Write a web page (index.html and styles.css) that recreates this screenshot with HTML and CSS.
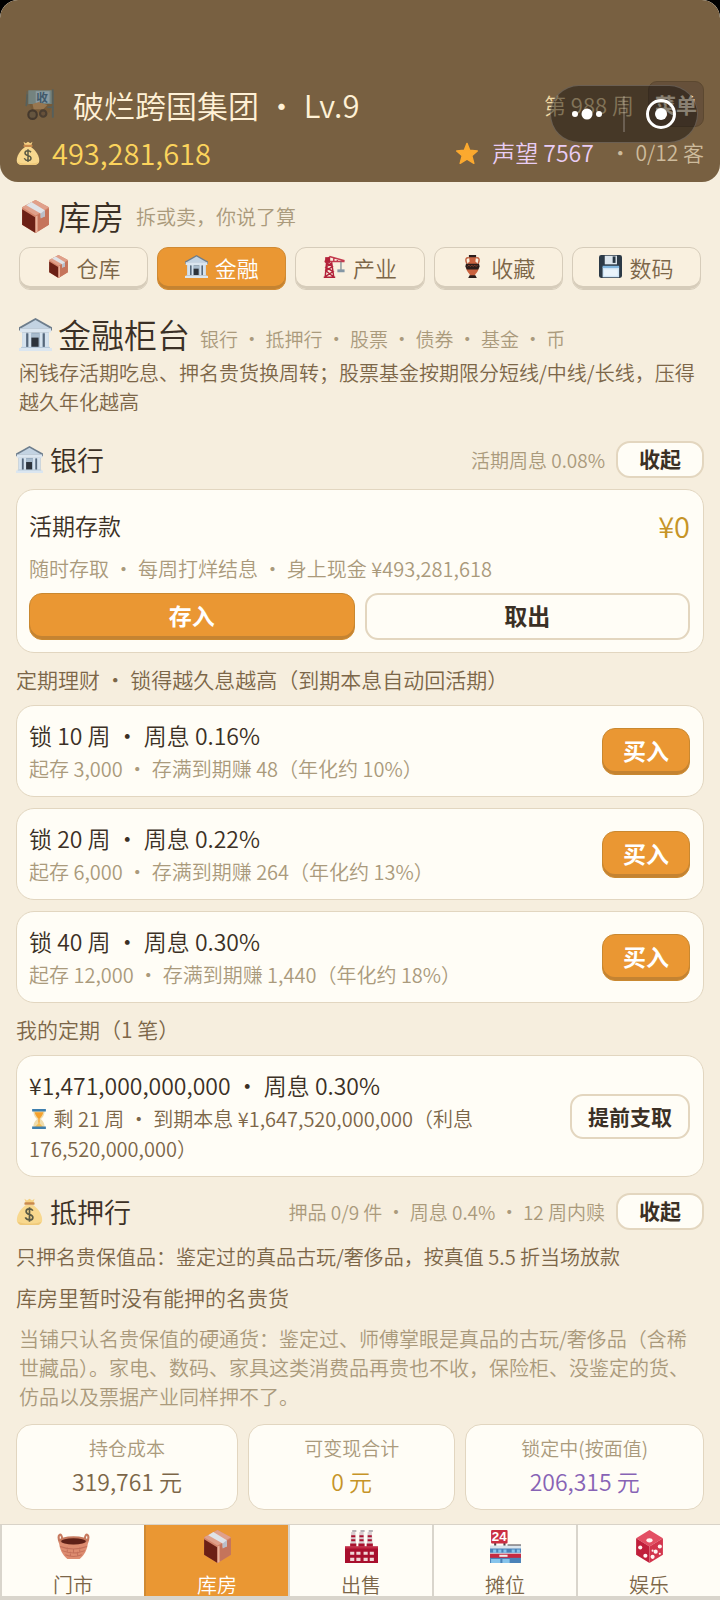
FILE: index.html
```html
<!DOCTYPE html>
<html lang="zh-CN">
<head>
    <meta charset="UTF-8">
    <meta name="viewport" content="width=device-width, initial-scale=1">
    <title>破烂跨国集团</title>
    <link rel="stylesheet" href="styles.css">
</head>
<body>
    <!-- icon sprite -->
    <svg class="sprite" aria-hidden="true">
        <symbol id="i-box" viewBox="0 0 32 32">
            <path fill="#d3856b" d="M16 0 29 7v17L16 32 3 24V7z"/>
            <path fill="#e0a08a" d="M16 0 29 7 16 15 3 7z"/>
            <path fill="#6b2015" d="M3 9l13 8v15L3 24z"/>
            <path fill="#c5745b" d="M29 8v16l-13 8V16z"/>
            <path fill="#e9b29c" d="M16 16l2-1v16l-2 1z"/>
            <path fill="#dfe3e8" d="M7 5l5-3 13 8v6l-4 1v-4z"/>
            <path fill="#b9bfc9" d="M21 13l4-3v6l-4 2z"/>
        </symbol>
        <symbol id="i-bank" viewBox="0 0 32 32">
            <path fill="#6d7d8c" d="M16 0 32 9v3H0V9z"/>
            <path fill="#c3d3e2" d="M16 2 30 10H2z"/>
            <path fill="#dbe6f0" d="M1 10h30v4H1z"/>
            <path fill="#8fa5ba" d="M3 14h26v14H3z"/>
            <path fill="#d5e2ee" d="M3 14h4v14H3zM9 14h3v14H9zM20 14h3v14h-3zM25 14h4v14h-4z"/>
            <path fill="#56677a" d="M7 15h2v13H7zM23 15h2v13h-2z"/>
            <path fill="#a9bccd" d="M12 15h8v13h-8z"/>
            <path fill="#2d333b" d="M12 19h7v9h-7z"/>
            <path fill="#b7c9da" d="M2 28h28v2H2z"/>
            <path fill="#dbe6f0" d="M0 29h32v3H0z"/>
        </symbol>
        <symbol id="i-crane" viewBox="0 0 32 32">
            <path fill="none" stroke="#b3223a" stroke-width="2" d="M5 10 3 31M12 10l3 21M5 11l8 5-9 6 10 8M12 11l-8 6 10 6-11 7M1 31h16"/>
            <path fill="none" stroke="#c33a4e" stroke-width="2" d="M2 9h28M9 2l21 6M10 2 3 8M15 8V4M20 8V5"/>
            <path fill="#b3223a" d="M3 3h7v8H3z"/>
            <path stroke="#697987" stroke-width="1.5" d="M25 9v12"/>
            <path fill="#8497a5" d="M20 20h10v4H20z"/>
        </symbol>
        <symbol id="i-vase" viewBox="0 0 32 32">
            <path fill="none" stroke="#bf5d3c" stroke-width="2" d="M11 4C6 3 6 7 8 12M21 4c5-1 5 3 3 8"/>
            <path fill="#c9623f" d="M11 2h10l-1 7c5 3 6 9 3 14-2 3-4 4-4 7h-6c0-3-2-4-4-7-3-5-2-11 3-14z"/>
            <path fill="#2b1d1b" d="M11 0h10v3H11zM7 12h18l1 4-2 4H8l-2-4zM12 28h8l2 4H10z"/>
            <path fill="none" stroke="#a54c32" d="M9 16l2-2 2 2 2-2 2 2 2-2 2 2 2-2"/>
        </symbol>
        <symbol id="i-disk" viewBox="0 0 32 32">
            <rect width="32" height="32" rx="3" fill="#2c3a47"/>
            <path fill="#dce6ee" d="M8 1h17v12H8z"/>
            <path fill="#263542" d="M19 2h4v9h-4z"/>
            <path fill="#cfe5f6" d="M5 17h23v14H5z"/>
            <path fill="#7fb6e0" d="M5 15h23v3H5z"/>
            <path fill="#eaf4fb" d="M7 20h19v9H7z"/>
        </symbol>
        <symbol id="i-bag" viewBox="0 0 32 32">
            <path fill="#f6d183" d="M10 1l3 2 3-2 3 2 3-2-2 6h-8z"/>
            <path fill="#f8d88e" d="M12 8h8c7 5 11 12 11 18 0 4-3 6-7 6H8c-4 0-7-2-7-6 0-6 4-13 11-18z"/>
            <path fill="#efc97a" d="M2 28c7 3 21 3 28 0-1 3-3 4-6 4H8c-3 0-5-1-6-4z"/>
            <rect x="10" y="5" width="12" height="3" rx="1" fill="#c98a4c"/>
            <path fill="none" stroke="#5b5b45" stroke-width="2" d="M20 15c-2-3-8-3-8 1 0 5 8 2 8 7 0 4-7 4-9 0M16 11v17"/>
        </symbol>
        <symbol id="i-star" viewBox="0 0 32 32">
            <path fill="#fba92f" stroke="#fba92f" stroke-width="2" stroke-linejoin="round" d="M16 2l4 10 11 1-8 7 3 11-10-6-10 6 3-11-8-7 11-1z"/>
        </symbol>
        <symbol id="i-hourglass" viewBox="0 0 32 32">
            <path fill="#f0dcab" d="M7 3h18c0 7-3 10-6 13 3 3 6 6 6 13H7c0-7 3-10 6-13-3-3-6-6-6-13z"/>
            <path fill="#f5a12d" d="M9 5h14c-1 5-4 8-6 10v7h-2v-7C13 13 10 10 9 5z"/>
            <path fill="#f7bf55" d="M16 22l7 7H9z"/>
            <path fill="#3f7fae" d="M5 0h22v4H5zM5 28h22v4H5z"/>
        </symbol>
        <symbol id="i-basket" viewBox="0 0 32 32">
            <path fill="none" stroke="#c77a5f" stroke-width="2" d="M3 13C-1 3 5 2 5 9M29 13c4-10-2-11-2-4"/>
            <path fill="#dd8c70" d="M2 11h28c0 8-4 14-8 17H10C6 25 2 19 2 11z"/>
            <ellipse cx="16" cy="10" rx="14" ry="4" fill="#c77a5f"/>
            <ellipse cx="16" cy="11" rx="12" ry="3" fill="#5f2118"/>
            <path fill="none" stroke="#c4705a" d="M3 16c8 3 18 3 26 0M5 20c7 3 15 3 22 0M8 24c5 2 11 2 16 0M10 17v4M16 18v4M22 17v4M13 21v4M20 21v4"/>
        </symbol>
        <symbol id="i-factory" viewBox="0 0 32 32">
            <path fill="#d8cdd0" d="M6 2h4l1 15H5zM14 2h4l1 15h-6zM22 2h4l1 15h-6z"/>
            <path fill="#a9122e" d="M6 5h4v2H6zM6 9h4v2H6zM5 13h6v3H5zM14 5h4v2h-4zM14 9h4v2h-4zM13 13h6v3h-6zM22 5h4v2h-4zM22 9h4v2h-4zM21 13h6v3h-6z"/>
            <path fill="#b5b1b5" d="M7 0h4v2H7zM15 0h4v2h-4zM23 0h4v2h-4z"/>
            <path fill="#a80f2d" d="M0 16h32v16H0z"/>
            <path fill="#c22a44" d="M0 16h32v2H0z"/>
            <path fill="#f0d6d7" d="M5 21h4v3H5zM11 21h4v3h-4zM18 21h4v3h-4zM24 21h4v3h-4zM5 27h4v3H5zM11 27h4v3h-4zM18 27h4v3h-4zM24 27h4v3h-4z"/>
        </symbol>
        <symbol id="i-store" viewBox="0 0 32 32">
            <path fill="#4b4448" d="M5 12h2v4H5zM14 12h2v4h-2zM18 14h13v3H18z"/>
            <rect x="2" width="16" height="13" rx="1" fill="#ca2f43"/>
            <text class="store-sign" x="10" y="11" text-anchor="middle">24</text>
            <path fill="#4a82b8" d="M1 16h30v16H1z"/>
            <path fill="#dbe5ed" d="M1 15h30v3H1zM1 22h30v3H1z"/>
            <path fill="#86c4ec" d="M4 19h3v3H4zM9 19h3v3H9zM14 19h3v3h-3zM22 19h3v3h-3zM27 19h3v3h-3zM2 28h9v4H2zM13 28h7v4h-7z"/>
            <path fill="#c52a42" d="M1 23h30v4H1z"/>
            <path fill="#f2edeb" d="M10 24h8v2h-8z"/>
        </symbol>
        <symbol id="i-dice" viewBox="0 0 32 32">
            <path fill="#e34f63" d="M16 0 29 8 16 16 3 8z"/>
            <path fill="#c01f3b" d="M3 8l13 8v16L3 24z"/>
            <path fill="#d3354d" d="M29 8v16l-13 8V16z"/>
            <g fill="#fff5f3"><ellipse cx="16" cy="10" rx="3" ry="2"/><circle cx="7" cy="17" r="2"/><circle cx="12" cy="25" r="2"/><circle cx="19" cy="26" r="2"/><circle cx="22" cy="21" r="2"/><circle cx="26" cy="16" r="2"/><circle cx="26" cy="23" r="1"/><circle cx="19" cy="20" r="1"/></g>
        </symbol>
        <symbol id="i-cart" viewBox="0 0 32 32">
            <path fill="#696250" d="M3 4h26v13H3z"/>
            <path fill="#74837f" d="M5 3h22v13H5z"/>
            <path fill="#8a9ba2" d="M12 4h13v11H12z"/>
            <path stroke="#56605c" stroke-width="1.5" d="M28 2v27M4 7l-1 11"/>
            <path fill="#765a38" d="M6 16h22l-3 8H9z"/>
            <path fill="#987750" d="M9 16l6-2 8 3-4 4h-9z"/>
            <circle cx="9" cy="26" r="4" fill="#65553f" stroke="#45392d" stroke-width="2"/>
            <circle cx="19" cy="25" r="3" fill="#67513a" stroke="#4b3e31" stroke-width="2"/>
            <path fill="none" stroke="#56605c" stroke-width="1.5" d="M23 19h5v9"/>
            <text class="cart-sign" x="18" y="14" text-anchor="middle">收</text>
        </symbol>
    </svg>

    <header class="topbar">
        <div class="topbar-row">
            <svg class="cart-icon"><use href="#i-cart"/></svg>
            <h1 class="company">破烂跨国集团 ・ Lv.9</h1>
            <span class="week">第 988 周</span>
            <button class="menu-btn" type="button">菜单</button>
        </div>
        <div class="topbar-row stats-row">
            <svg class="bag-icon"><use href="#i-bag"/></svg>
            <span class="money">493,281,618</span>
            <svg class="star-icon"><use href="#i-star"/></svg>
            <span class="fame">声望 7567</span>
            <span class="guests">・ 0/12 客</span>
        </div>
        <!-- host app capsule floats over the bar -->
        <div class="capsule">
            <button type="button" aria-label="更多"><svg width="36" height="36" viewBox="0 0 36 36" fill="#fff"><circle cx="6" cy="18" r="3"/><circle cx="18" cy="18" r="5.5"/><circle cx="30" cy="18" r="3"/></svg></button>
            <span class="capsule-line"></span>
            <button type="button" aria-label="关闭"><svg width="36" height="36" viewBox="0 0 36 36"><circle cx="18" cy="18" r="13.5" fill="none" stroke="#fff" stroke-width="3"/><circle cx="18" cy="18" r="6" fill="#fff"/></svg></button>
        </div>
    </header>

    <main class="content">
        <div class="page-title">
            <svg class="title-icon"><use href="#i-box"/></svg>
            <h2>库房</h2>
            <span class="page-hint">拆或卖，你说了算</span>
        </div>

        <div class="tabs">
            <button class="tab" type="button"><svg><use href="#i-box"/></svg>仓库</button>
            <button class="tab active" type="button"><svg><use href="#i-bank"/></svg>金融</button>
            <button class="tab" type="button"><svg><use href="#i-crane"/></svg>产业</button>
            <button class="tab" type="button"><svg><use href="#i-vase"/></svg>收藏</button>
            <button class="tab" type="button"><svg><use href="#i-disk"/></svg>数码</button>
        </div>

        <section class="intro">
            <div class="intro-head">
                <svg class="title-icon"><use href="#i-bank"/></svg>
                <h2>金融柜台</h2>
                <span class="intro-hint">银行 ・ 抵押行 ・ 股票 ・ 债券 ・ 基金 ・ 币</span>
            </div>
            <p>闲钱存活期吃息、押名贵货换周转；股票基金按期限分短线/中线/长线，压得越久年化越高</p>
        </section>

        <section>
            <div class="section-head">
                <svg class="section-icon"><use href="#i-bank"/></svg>
                <h3>银行</h3>
                <span class="section-note">活期周息 0.08%</span>
                <button class="btn btn-small" type="button">收起</button>
            </div>

            <div class="card">
                <div class="deposit-head">
                    <span class="item-title">活期存款</span>
                    <span class="balance">¥0</span>
                </div>
                <p class="item-sub deposit-sub">随时存取 ・ 每周打烊结息 ・ 身上现金 ¥493,281,618</p>
                <div class="deposit-actions">
                    <button class="btn btn-primary" type="button">存入</button>
                    <button class="btn" type="button">取出</button>
                </div>
            </div>

            <h4 class="subhead">定期理财 ・ 锁得越久息越高（到期本息自动回活期）</h4>
            <div class="card item">
                <div class="item-text">
                    <p class="item-title">锁 10 周 ・ 周息 0.16%</p>
                    <p class="item-sub">起存 3,000 ・ 存满到期赚 48（年化约 10%）</p>
                </div>
                <button class="btn btn-primary" type="button">买入</button>
            </div>
            <div class="card item">
                <div class="item-text">
                    <p class="item-title">锁 20 周 ・ 周息 0.22%</p>
                    <p class="item-sub">起存 6,000 ・ 存满到期赚 264（年化约 13%）</p>
                </div>
                <button class="btn btn-primary" type="button">买入</button>
            </div>
            <div class="card item">
                <div class="item-text">
                    <p class="item-title">锁 40 周 ・ 周息 0.30%</p>
                    <p class="item-sub">起存 12,000 ・ 存满到期赚 1,440（年化约 18%）</p>
                </div>
                <button class="btn btn-primary" type="button">买入</button>
            </div>

            <h4 class="subhead">我的定期（1 笔）</h4>
            <div class="card item">
                <div class="item-text">
                    <p class="item-title">¥1,471,000,000,000 ・ 周息 0.30%</p>
                    <p class="item-sub dark"><svg class="inline-icon"><use href="#i-hourglass"/></svg> 剩 21 周 ・ 到期本息 ¥1,647,520,000,000（利息 176,520,000,000）</p>
                </div>
                <button class="btn btn-early" type="button">提前支取</button>
            </div>
        </section>

        <section class="pawn">
            <div class="section-head">
                <svg class="section-icon"><use href="#i-bag"/></svg>
                <h3>抵押行</h3>
                <span class="section-note">押品 0/9 件 ・ 周息 0.4% ・ 12 周内赎</span>
                <button class="btn btn-small" type="button">收起</button>
            </div>
            <p class="pawn-rule">只押名贵保值品：鉴定过的真品古玩/奢侈品，按真值 5.5 折当场放款</p>
            <p class="pawn-empty">库房里暂时没有能押的名贵货</p>
            <p class="pawn-note">当铺只认名贵保值的硬通货：鉴定过、师傅掌眼是真品的古玩/奢侈品（含稀世藏品）。家电、数码、家具这类消费品再贵也不收，保险柜、没鉴定的货、仿品以及票据产业同样押不了。</p>
        </section>

        <div class="totals">
            <div class="total"><span>持仓成本</span><strong>319,761 元</strong></div>
            <div class="total gold"><span>可变现合计</span><strong>0 元</strong></div>
            <div class="total purple"><span>锁定中(按面值)</span><strong>206,315 元</strong></div>
        </div>
    </main>

    <nav class="bottom-nav">
        <button type="button"><svg><use href="#i-basket"/></svg>门市</button>
        <button class="active" type="button"><svg><use href="#i-box"/></svg>库房</button>
        <button type="button"><svg><use href="#i-factory"/></svg>出售</button>
        <button type="button"><svg><use href="#i-store"/></svg>摊位</button>
        <button type="button"><svg><use href="#i-dice"/></svg>娱乐</button>
    </nav>
</body>
</html>
```
FILE: styles.css
```css
* {
    box-sizing: border-box;
}
html {
    background: #000;
}
body {
    margin: 0;
    min-height: 100vh;
    display: flex;
    flex-direction: column;
    background: #f6eede;
    border-radius: 18px 18px 0 0;
    color: #3b3025;
    font-family: "Noto Sans CJK SC", sans-serif;
    font-weight: 350;
    font-size: 20px;
    line-height: 29px;
}
h1, h2, h3, h4, p {
    margin: 0;
    font-weight: inherit;
}
button {
    font-family: inherit;
    cursor: pointer;
}
.sprite {
    display: none;
}
.store-sign {
    font: bold 13px "Liberation Sans", sans-serif;
    fill: #fff;
}
.cart-sign {
    font: bold 11px "Noto Sans CJK SC", sans-serif;
    fill: #40586a;
}

/* top bar */
.topbar {
    position: relative;
    padding: 80px 16px 5px;
    background: #786041;
    border-radius: 18px;
}
.topbar-row {
    display: flex;
    align-items: center;
    height: 48px;
}
.cart-icon {
    width: 34px;
    height: 34px;
    margin: 0 16px 0 7px;
}
.company {
    color: #fff1d6;
    font-size: 31px;
}
.week {
    margin-left: auto;
    color: #f0d9a4;
    font-size: 22px;
}
.menu-btn {
    height: 46px;
    margin-left: 14px;
    padding: 0 6px;
    border: 1px solid #5c4830;
    border-radius: 9px;
    background: #66503a;
    color: #fff1d6;
    font-size: 21px;
    font-weight: 700;
}
.stats-row {
    height: 49px;
}
.bag-icon {
    width: 24px;
    height: 24px;
}
.money {
    margin-left: 12px;
    color: #fcd45c;
    font-size: 29px;
}
.star-icon {
    width: 22px;
    height: 22px;
    margin: 0 14px 0 auto;
}
.fame {
    color: #e9cdf5;
    font-size: 23px;
}
.guests {
    margin-left: 16px;
    color: #cdbb9c;
    font-size: 21px;
}
.capsule {
    position: absolute;
    top: 85px;
    right: 22px;
    width: 148px;
    height: 58px;
    display: flex;
    align-items: center;
    justify-content: center;
    gap: 18px;
    border: 1px solid rgba(255, 255, 255, .2);
    border-radius: 29px;
    background: rgba(20, 16, 14, .5);
}
.capsule button {
    display: flex;
    padding: 0;
    border: 0;
    background: none;
}
.capsule-line {
    width: 2px;
    height: 36px;
    background: rgba(255, 255, 255, .2);
}

/* page */
.content {
    flex: 1;
    padding: 12px 16px 14px;
}
.page-title,
.intro-head {
    display: flex;
    align-items: center;
    padding-left: 3px;
}
.page-title {
    height: 44px;
}
.page-title h2,
.intro-head h2 {
    margin-left: 6px;
    font-size: 33px;
    line-height: 40px;
}
.title-icon {
    width: 33px;
    height: 33px;
}
.page-hint {
    margin-left: 12px;
    color: #aa9a7c;
    font-size: 20px;
}
.tabs {
    display: grid;
    grid-template-columns: repeat(5, 1fr);
    gap: 9px;
    margin: 9px 3px 24px;
}
.tab {
    display: flex;
    align-items: center;
    justify-content: center;
    height: 43px;
    padding: 0 0 4px;
    border: 1px solid #d6ccba;
    border-radius: 11px;
    background: #f9f0df;
    box-shadow: inset 0 -3px #d6ccba;
    color: #7c6648;
    font-size: 22px;
    font-weight: 350;
}
.tab svg {
    width: 23px;
    height: 23px;
    margin-right: 7px;
}
.tab.active {
    border-color: #d08a33;
    background: #ea9733;
    box-shadow: inset 0 -3px #c48332;
    color: #fff;
}
.intro-head {
    height: 40px;
}
.intro-hint {
    margin: 8px 0 0 10px;
    color: #aa9a7c;
    font-size: 19px;
}
.intro p {
    padding: 4px 3px 0;
    color: #7c6648;
}

.section-head {
    display: flex;
    align-items: center;
    margin: 25px 0 11px;
}
.section-icon {
    width: 27px;
    height: 27px;
}
.section-head h3 {
    margin-left: 7px;
    font-size: 27px;
}
.section-note {
    margin-left: auto;
    color: #aa9a7c;
    font-size: 19px;
}
.btn {
    height: 47px;
    padding: 0 18px 3px;
    border: 2px solid #e3d6bf;
    border-radius: 13px;
    background: #fffdf6;
    color: #3b3025;
    font-size: 23px;
    font-weight: 700;
    white-space: nowrap;
}
.btn-primary {
    padding: 0 20px 4px;
    border: 1px solid #c98830;
    background: #ea9733;
    box-shadow: inset 0 -3px #c48332;
    color: #fff;
}
.btn-small {
    height: 37px;
    margin-left: 11px;
    padding: 0 21px 3px;
    border-radius: 14px;
    font-size: 21px;
    line-height: 30px;
}
.btn-early {
    height: 45px;
    padding: 0 16px 2px;
    font-size: 21px;
}

.card {
    padding: 12px 13px 12px 12px;
    border: 1px solid #e2d6c0;
    border-radius: 18px;
    background: #fffdf6;
}
.item {
    display: flex;
    align-items: center;
    gap: 16px;
    padding-top: 13px;
}
.item + .item {
    margin-top: 11px;
}
.item-text {
    flex: 1;
}
.item-text p + p {
    margin-top: 2px;
}
.item-title {
    font-size: 23px;
    line-height: 33px;
}
.item-sub {
    color: #aa9a7c;
    line-height: 30px;
}
.item-sub.dark {
    color: #7c6648;
}
.inline-icon {
    width: 20px;
    height: 20px;
    vertical-align: -2px;
}
.deposit-head {
    display: flex;
    align-items: center;
    justify-content: space-between;
    padding-top: 7px;
}
.balance {
    color: #c69427;
    font-size: 29px;
}
.deposit-sub {
    margin: 12px 0 9px;
}
.deposit-actions {
    display: grid;
    grid-template-columns: 1fr 1fr;
    gap: 10px;
}
.subhead {
    padding: 12px 0 11px;
    color: #7c6648;
    font-size: 21px;
}

.pawn .section-head {
    margin: 16px 0 12px;
}
.pawn-rule {
    color: #7c6648;
}
.pawn-empty {
    margin-top: 12px;
    color: #7c6648;
    font-size: 21px;
}
.pawn-note {
    padding: 12px 3px 13px;
    color: #aa9a7c;
}

.totals {
    display: flex;
    gap: 10px;
}
.total {
    flex: 1 1 auto;
    padding: 8px 0 9px;
    display: flex;
    flex-direction: column;
    align-items: center;
    border: 1px solid #e2d6c0;
    border-radius: 16px;
    background: #fffdf6;
    color: #7c6648;
}
.total span {
    color: #aa9a7c;
    font-size: 19px;
}
.total strong {
    font-size: 23px;
    font-weight: 350;
    line-height: 38px;
}
.total.gold {
    color: #c69427;
}
.total.purple {
    color: #8763b5;
}

.bottom-nav {
    position: sticky;
    bottom: 0;
    display: grid;
    grid-template-columns: repeat(5, 1fr);
    border-top: 1px solid #d9d3c8;
    border-bottom: 4px solid #d9d5cc;
    background: #fffdf6;
}
.bottom-nav button {
    display: flex;
    flex-direction: column;
    align-items: center;
    height: 71px;
    padding: 5px 0 0;
    border: 0;
    border-left: 2px solid #d9d5cc;
    background: none;
    color: #7c6648;
    font-size: 20px;
    font-weight: 350;
    line-height: 22px;
}
.bottom-nav svg {
    flex: none;
    width: 33px;
    height: 33px;
    margin-bottom: 11px;
}
.bottom-nav .active {
    border-color: #d08a33;
    background: #ea9733;
    color: #fff;
}
```
